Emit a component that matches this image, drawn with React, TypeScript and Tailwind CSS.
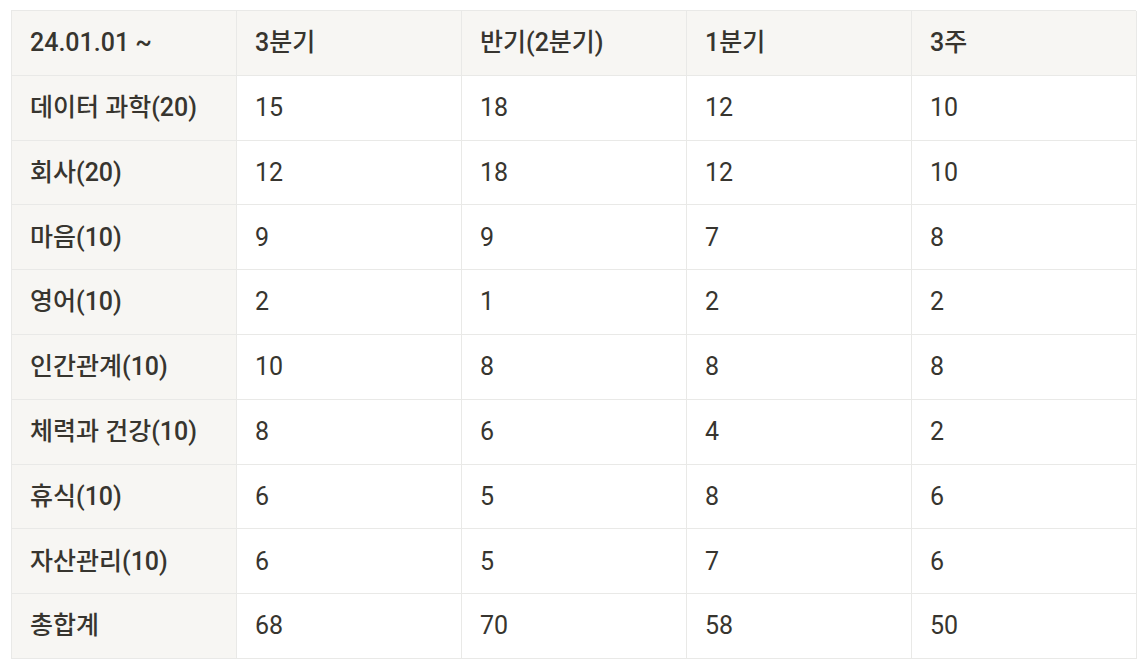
import React from "react";

const header = ["24.01.01 ~", "3분기", "반기(2분기)", "1분기", "3주"];

const rows: string[][] = [
  ["데이터 과학(20)", "15", "18", "12", "10"],
  ["회사(20)", "12", "18", "12", "10"],
  ["마음(10)", "9", "9", "7", "8"],
  ["영어(10)", "2", "1", "2", "2"],
  ["인간관계(10)", "10", "8", "8", "8"],
  ["체력과 건강(10)", "8", "6", "4", "2"],
  ["휴식(10)", "6", "5", "8", "6"],
  ["자산관리(10)", "6", "5", "7", "6"],
  ["총합계", "68", "70", "58", "50"],
];

export default function App() {
  return (
    <div
      className="w-[1146px] h-[671px] bg-white pt-[10px] pl-[11px] text-[#37352f]"
      style={{ fontFamily: 'Roboto, "Noto Sans CJK KR", sans-serif' }}
    >
      <div className="grid grid-cols-[225px_225px_225px_225px_225px] w-[1125px] border-l border-t border-[#e9e9e7]">
        {header.map((h) => (
          <div
            key={h}
            className="h-[64.8px] bg-[#f7f6f3] border-r border-b border-[#e9e9e7] px-[18px] flex items-center text-[25px] font-medium"
          >
            {h}
          </div>
        ))}
        {rows.map((r) =>
          r.map((c, i) => (
            <div
              key={r[0] + i}
              className={
                i === 0
                  ? "h-[64.8px] bg-[#f7f6f3] border-r border-b border-[#e9e9e7] px-[18px] flex items-center text-[25px] font-medium"
                  : "h-[64.8px] bg-white border-r border-b border-[#e9e9e7] px-[18px] flex items-center text-[25px]"
              }
            >
              {c}
            </div>
          ))
        )}
      </div>
    </div>
  );
}
